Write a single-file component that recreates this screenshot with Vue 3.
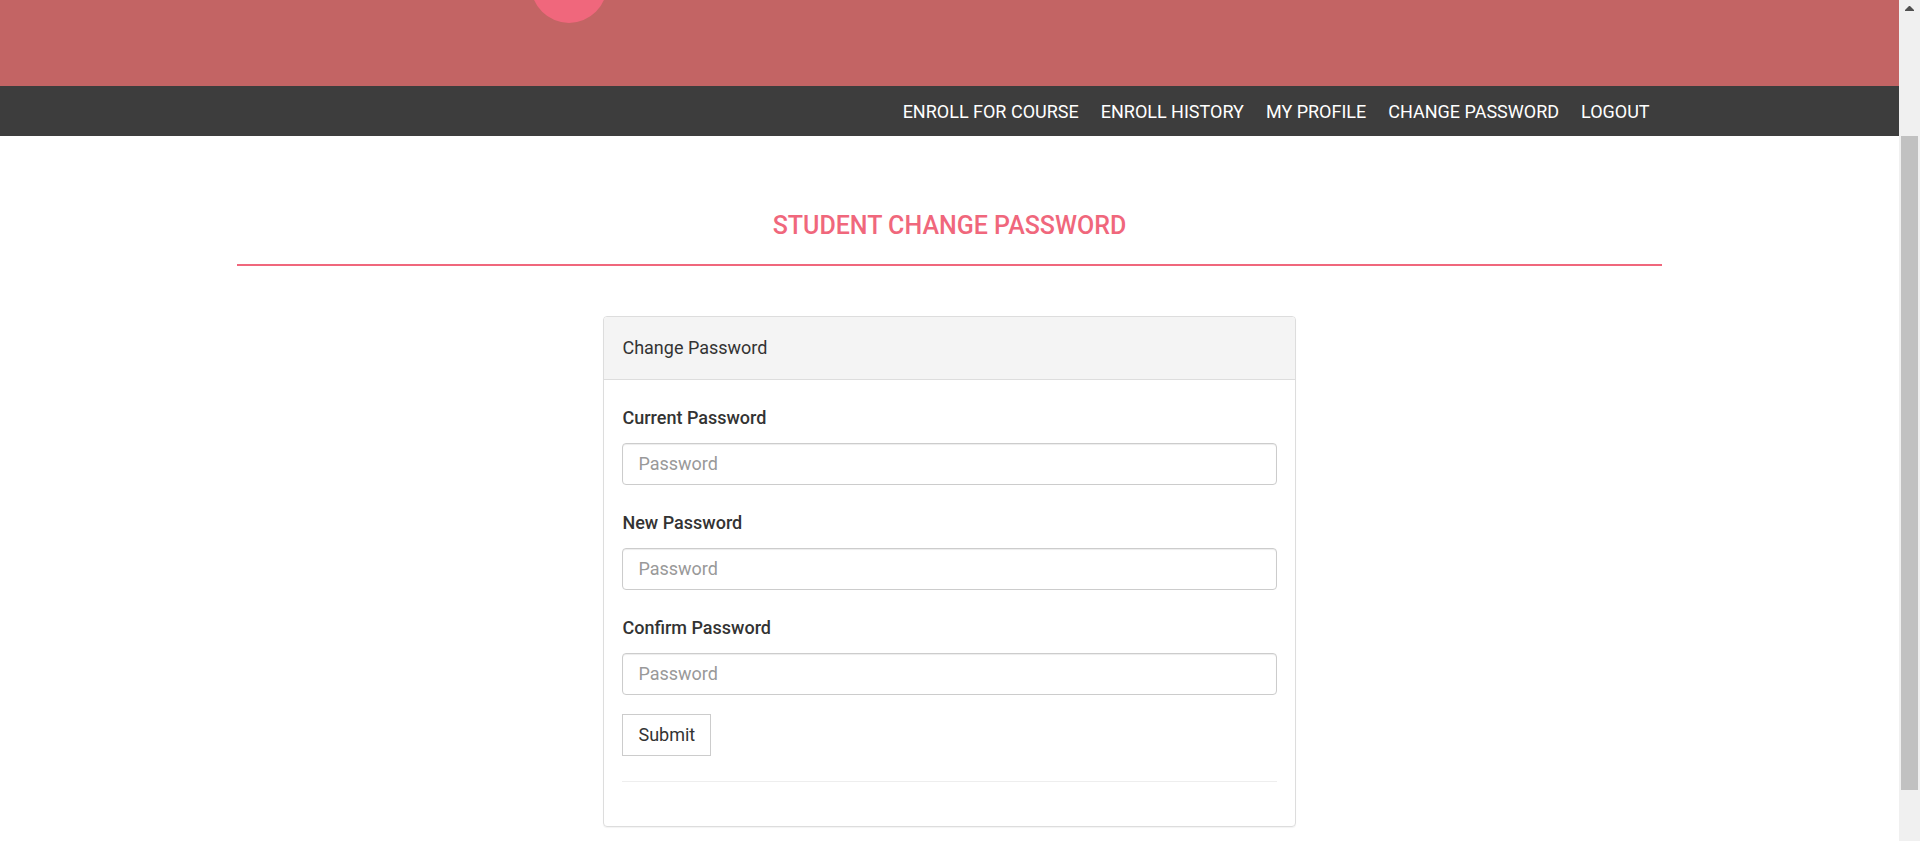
<script setup>
const links = ['Enroll for course', 'Enroll history', 'My profile', 'Change password', 'Logout']
const fields = [
  { id: 'cpass', label: 'Current Password' },
  { id: 'newpass', label: 'New Password' },
  { id: 'cnfpass', label: 'Confirm Password' },
]
</script>

<template>
  <div class="window">
    <div class="page">
      <header class="banner">
        <div class="container"><span class="badge"></span></div>
      </header>
      <nav class="menu">
        <div class="container menu-list">
          <a v-for="link in links" :key="link" href="#">{{ link }}</a>
        </div>
      </nav>
      <main class="container">
        <h1>Student Change Password</h1>
        <section class="panel">
          <div class="panel-heading">Change Password</div>
          <form class="panel-body" @submit.prevent>
            <div v-for="field in fields" :key="field.id" class="form-group">
              <label :for="field.id">{{ field.label }}</label>
              <input :id="field.id" type="password" placeholder="Password" />
            </div>
            <button type="submit">Submit</button>
            <hr />
          </form>
        </section>
      </main>
    </div>
    <div class="scrollbar" aria-hidden="true">
      <svg width="9" height="5" viewBox="0 0 9 5"><path d="M4 0h1l4 4v1H0V4z" fill="#505050" /></svg>
      <div class="thumb"></div>
    </div>
  </div>
</template>

<style>
body {
  background: #fff;
  overflow: hidden;
}
</style>

<style scoped>
.window {
  display: flex;
  height: 100vh;
  color: #333;
  font: 400 18px/30px Roboto, "Liberation Sans", sans-serif;
}
.page {
  flex: 1;
  min-width: 0;
}
.container {
  width: 75%;
  margin: 0 auto;
}
.banner {
  height: 86px;
  overflow: hidden;
  background: #c36464;
}
.badge {
  display: block;
  width: 76px;
  height: 76px;
  margin: -53px 0 0 294px;
  border-radius: 50%;
  background: #f0677c;
}
.menu {
  background: #3d3d3d;
}
.menu-list {
  display: flex;
  justify-content: flex-end;
  gap: 22px;
  box-sizing: border-box;
  padding: 11px 12px 9px;
}
.menu a {
  color: #fff;
  text-decoration: none;
  text-transform: uppercase;
}
h1 {
  margin: 70px 0 50px;
  padding-bottom: 18px;
  border-bottom: 2px solid #f0677c;
  color: #f0677c;
  font-size: 25px;
  font-weight: 500;
  line-height: 40px;
  text-align: center;
  text-transform: uppercase;
}
.panel {
  box-sizing: border-box;
  width: calc(50% - 20px);
  margin: 0 auto;
  border: 1px solid #ddd;
  border-radius: 4px;
  box-shadow: 0 1px 1px rgba(0, 0, 0, 0.05);
}
.panel-heading {
  padding: 16px 18px;
  border-bottom: 1px solid #ddd;
  border-radius: 3px 3px 0 0;
  background: #f4f4f4;
}
.panel-body {
  padding: 23px 18px 24px;
}
.form-group {
  margin-bottom: 19px;
}
.form-group + .form-group {
  padding-top: 4px;
}
label {
  display: block;
  margin-bottom: 10px;
  font-weight: 500;
}
input {
  display: block;
  box-sizing: border-box;
  width: 100%;
  height: 42px;
  padding: 5px 15px 7px;
  border: 1px solid #ccc;
  border-radius: 4px;
  box-shadow: inset 0 1px 1px rgba(0, 0, 0, 0.075);
  background: #fff;
  font: inherit;
}
input::placeholder {
  color: #999;
  opacity: 1;
}
button {
  display: block;
  height: 42px;
  padding: 0 15px;
  border: 1px solid #ccc;
  background: #fff;
  color: #333;
  font: inherit;
}
hr {
  margin: 25px 0 20px;
  border: 0;
  border-top: 1px solid #eee;
}
.scrollbar {
  display: flex;
  flex-direction: column;
  align-items: center;
  box-sizing: border-box;
  width: 21px;
  padding: 6px 2px 0;
  background: #f0f0f0;
}
.thumb {
  width: 100%;
  height: 654px;
  margin-top: 125px;
  background: #c1c1c1;
}
</style>
